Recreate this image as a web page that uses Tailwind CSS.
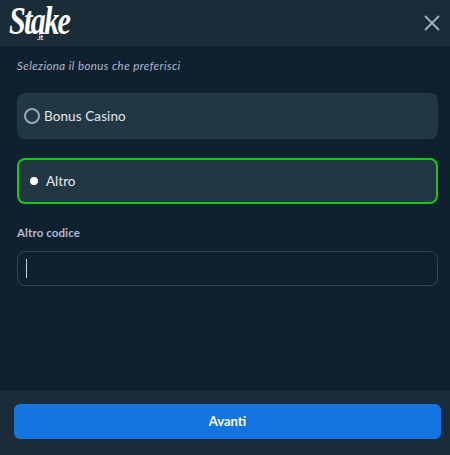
<!DOCTYPE html>
<html><head><meta charset="utf-8"><script src="https://cdn.jsdelivr.net/npm/@tailwindcss/browser@4"></script></head>
<body class="m-0">
<div class="w-[450px] h-[455px] flex flex-col bg-[#0f212e] overflow-hidden font-['Lato','Liberation_Sans',sans-serif]">
  <header class="h-[46px] shrink-0 bg-[#1a2c38] flex items-center justify-between pl-[8px] pr-[10px]">
    <div class="relative w-[70px] h-[40px]">
      <span class="absolute left-[1px] top-[5px] origin-top-left scale-y-[1.3] text-white text-[30px] leading-[20px] font-bold italic tracking-[-1.6px] font-['Liberation_Serif',serif]">Stake</span>
      <span class="absolute left-[29px] top-[31px] text-white text-[7px] leading-[7px] font-bold">.it</span>
    </div>
    <svg class="w-[16px] h-[16px]" viewBox="0 0 16 16" fill="none" stroke="#9fb0bf" stroke-width="1.8"><path d="M1 1 L15 15 M15 1 L1 15"/></svg>
  </header>
  <main class="flex-1 pl-[17px] pr-[12px] pt-[13px]">
    <p class="text-[11.5px] leading-[14px] italic text-[#b1bad3] tracking-[0.42px]">Seleziona il bonus che preferisci</p>
    <div class="mt-[20px] w-[421px] h-[46px] rounded-[8px] bg-[#213743] flex items-center pl-[7px] gap-[4px]">
      <span class="w-[16px] h-[16px] rounded-full border-2 border-[#9aa7b3]"></span>
      <span class="text-[13.5px] text-[#e3e8ee] tracking-[0.1px]">Bonus Casino</span>
    </div>
    <div class="mt-[19px] w-[421px] h-[46px] rounded-[8px] bg-[#213743] border-2 border-[#17c917] flex items-center pl-[11px] gap-[8px]">
      <span class="w-[8px] h-[8px] rounded-full bg-white"></span>
      <span class="text-[13.5px] text-[#e8ecf0]">Altro</span>
    </div>
    <label class="block mt-[22px] text-[11.5px] leading-[14px] font-bold text-[#b1bad3] tracking-[0.1px]">Altro codice</label>
    <div class="mt-[11px] w-[421px] h-[35px] rounded-[8px] border-[1.5px] border-[#2f4553] bg-[#0f212e] flex items-center pl-[7.5px]">
      <span class="w-[1.5px] h-[19px] bg-[#c9d1dc]"></span>
    </div>
  </main>
  <footer class="h-[65px] shrink-0 bg-[#1a2c38] flex items-start pt-[14px] pl-[14px] pr-[9px]">
    <button class="w-[427px] h-[35px] rounded-[6px] bg-[#1475e1] text-white text-[13px] font-bold">Avanti</button>
  </footer>
</div>
</body></html>
